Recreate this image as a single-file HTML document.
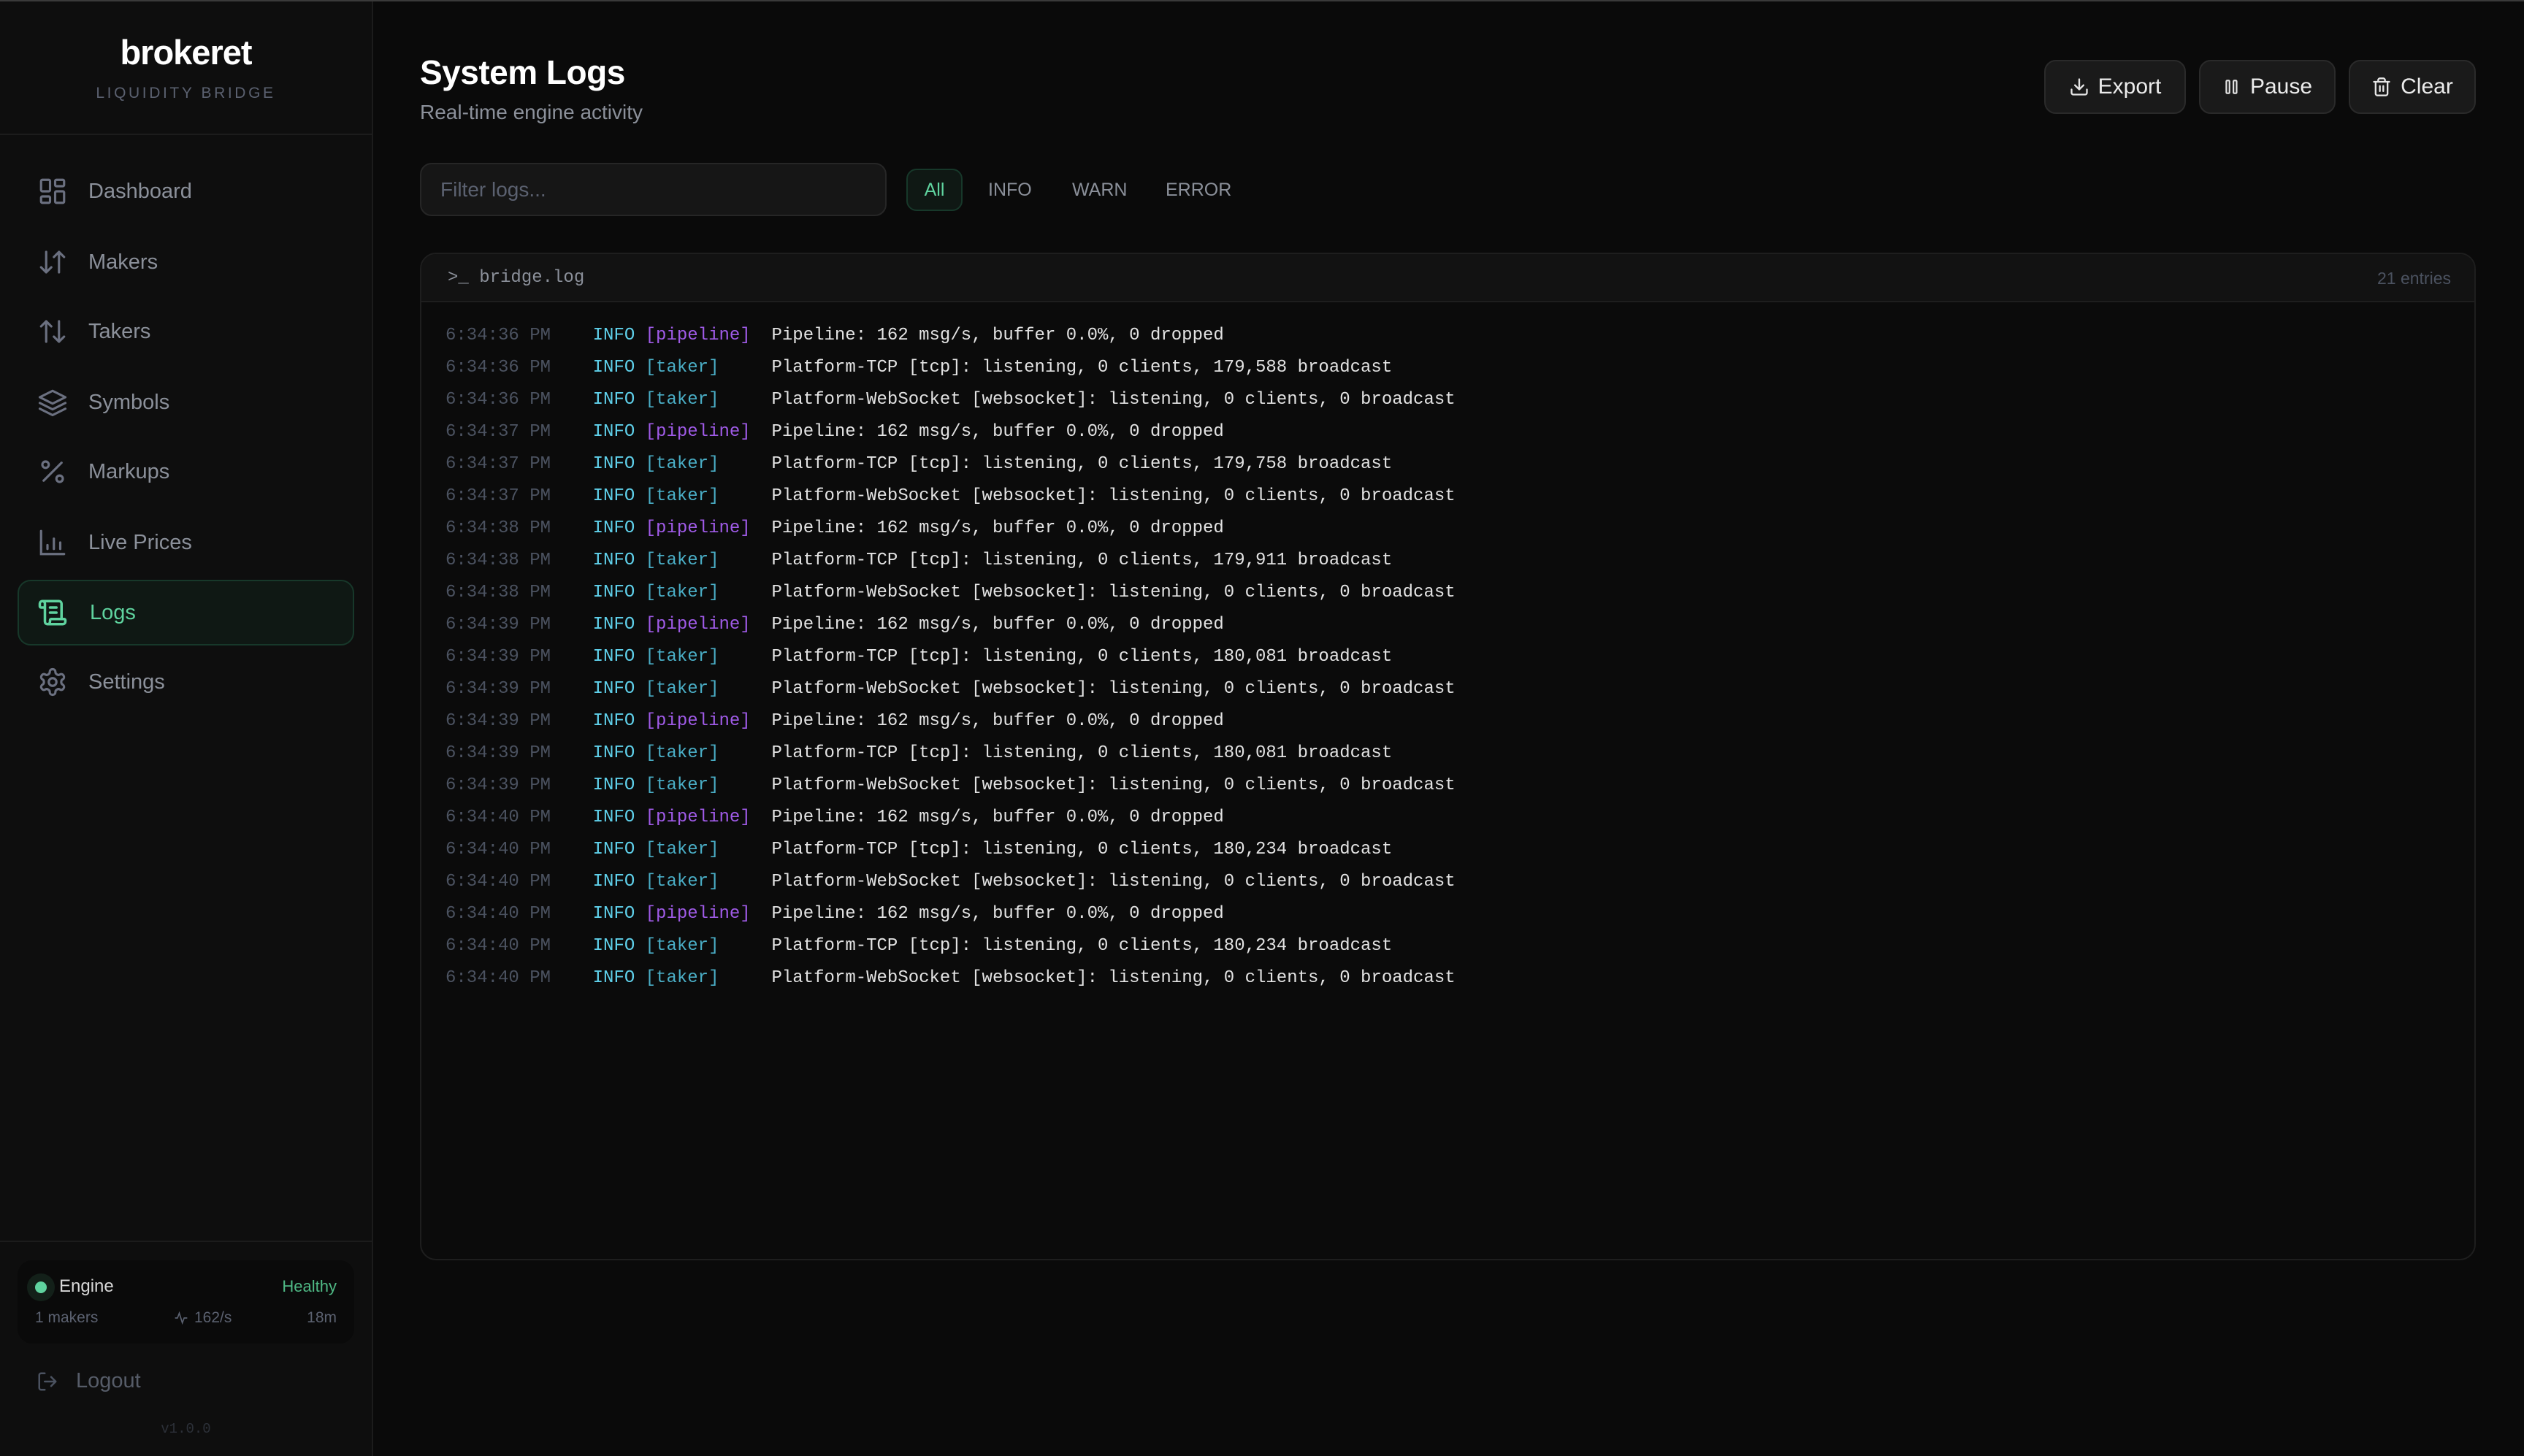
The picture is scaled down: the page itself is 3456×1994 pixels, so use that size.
<!DOCTYPE html>
<html><head><meta charset="utf-8"><style>
*{margin:0;padding:0;box-sizing:border-box}
html,body{width:3456px;height:1994px;background:#0a0a0a;overflow:hidden;font-family:"Liberation Sans",sans-serif}
.top{position:absolute;left:0;top:0;width:3456px;height:2px;background:#3a3a3a}
.side{position:absolute;left:0;top:2px;width:511px;height:1992px;background:#0e0e0e;border-right:2px solid #1c1c1c}
.logo{position:absolute;left:0;width:509px;top:42px;text-align:center;color:#fff;font-weight:bold;font-size:47px;letter-spacing:-1px}
.sub{position:absolute;left:0;width:509px;top:114px;text-align:center;color:#5b6170;font-size:21px;letter-spacing:3.6px}
.div{position:absolute;left:0;width:509px;height:2px;background:#1c1c1c}
.nav{position:absolute;left:24px;width:461px;height:90px;display:flex;align-items:center;color:#8b909a;font-size:29px}
.nav svg{position:absolute;left:27px;top:24px}
.nav span{position:absolute;left:97px}
.nav.act{background:#0f1814;border:2px solid #17382a;border-radius:18px;color:#5fd39f}
.eng{position:absolute;left:24px;top:1724px;width:461px;height:114px;background:#0a0a0a;border-radius:20px}
h1{position:absolute;left:575px;top:72px;font-size:46px;color:#fff;font-weight:bold;letter-spacing:-0.5px}
.desc{position:absolute;left:575px;top:138px;font-size:28px;color:#8b909a}
.btn{position:absolute;top:82px;height:74px;background:#1a1a1a;border:2px solid #2a2a2a;border-radius:16px;color:#ececec;font-size:30px;display:flex;align-items:center;justify-content:center;gap:12px}
.inp{position:absolute;left:575px;top:223px;width:639px;height:73px;background:#161616;border:2px solid #262626;border-radius:16px;color:#5b6170;font-size:28px;padding-left:26px;line-height:69px}
.tab{position:absolute;top:231px;height:58px;line-height:58px;font-size:25px;color:#8b909a}
.panel{position:absolute;left:575px;top:346px;width:2815px;height:1380px;background:#0b0b0b;border:2px solid #1e1e1e;border-radius:22px;overflow:hidden}
.ph{height:66px;background:#121212;border-bottom:2px solid #1e1e1e;position:relative}
.mono{font-family:"Liberation Mono","DejaVu Sans Mono",monospace}
.rows{position:absolute;left:33px;top:90px}
.r{height:44px;line-height:44px;font-size:24px;white-space:pre;color:#e3e3e3}
.t{color:#4b5260}.i{color:#5fd0ea}.p{color:#a05be8}.k{color:#4aaec6}
</style></head><body>
<div class="top"></div>
<div class="side">
<div class="logo">brokeret</div>
<div class="sub">LIQUIDITY BRIDGE</div>
<div class="div" style="top:181px"></div>

<div class="nav" style="top:215px"><svg width="42" height="42" viewBox="0 0 24 24" fill="none" stroke="#6b7080" stroke-width="1.8" stroke-linejoin="round"><rect x="3" y="3" width="7" height="9" rx="1"/><rect x="14" y="3" width="7" height="5" rx="1"/><rect x="14" y="12" width="7" height="9" rx="1"/><rect x="3" y="16" width="7" height="5" rx="1"/></svg><span>Dashboard</span></div>
<div class="nav" style="top:312px"><svg width="42" height="42" viewBox="0 0 24 24" fill="none" stroke="#6b7080" stroke-width="1.8" stroke-linecap="round" stroke-linejoin="round"><path d="M3 16l4 4 4-4M7 20V4M21 8l-4-4-4 4M17 4v16"/></svg><span>Makers</span></div>
<div class="nav" style="top:407px"><svg width="42" height="42" viewBox="0 0 24 24" fill="none" stroke="#6b7080" stroke-width="1.8" stroke-linecap="round" stroke-linejoin="round"><path d="M3 8l4-4 4 4M7 4v16M21 16l-4 4-4-4M17 20V4"/></svg><span>Takers</span></div>
<div class="nav" style="top:504px"><svg width="42" height="42" viewBox="0 0 24 24" fill="none" stroke="#6b7080" stroke-width="1.8" stroke-linecap="round" stroke-linejoin="round"><path d="M12 3L2 8l10 5 10-5-10-5z"/><path d="M2 12.5l10 5 10-5"/><path d="M2 17l10 5 10-5"/></svg><span>Symbols</span></div>
<div class="nav" style="top:599px"><svg width="42" height="42" viewBox="0 0 24 24" fill="none" stroke="#6b7080" stroke-width="1.8" stroke-linecap="round"><path d="M19 5L5 19"/><circle cx="6.5" cy="6.5" r="2.5"/><circle cx="17.5" cy="17.5" r="2.5"/></svg><span>Markups</span></div>
<div class="nav" style="top:696px"><svg width="42" height="42" viewBox="0 0 24 24" fill="none" stroke="#6b7080" stroke-width="1.8" stroke-linecap="round"><path d="M3 3v18h18M8 17v-3M13 17V9M18 17v-5"/></svg><span>Live Prices</span></div>
<div class="nav act" style="top:792px"><svg style="left:25px;top:22px" width="42" height="42" viewBox="0 0 24 24" fill="none" stroke="#5fd39f" stroke-width="2" stroke-linecap="round" stroke-linejoin="round"><path d="M15 12h-5M15 8h-5M19 17V5a2 2 0 0 0-2-2H4"/><path d="M8 21h12a2 2 0 0 0 2-2v-1a1 1 0 0 0-1-1H11a1 1 0 0 0-1 1v1a2 2 0 1 1-4 0V5a2 2 0 1 0-4 0v2a1 1 0 0 0 1 1h3"/></svg><span>Logs</span></div>
<div class="nav" style="top:887px"><svg width="42" height="42" viewBox="0 0 24 24" fill="none" stroke="#6b7080" stroke-width="1.8" stroke-linejoin="round"><path d="M12.2 2h-.4a2 2 0 0 0-2 2v.2a2 2 0 0 1-1 1.7l-.4.3a2 2 0 0 1-2 0l-.2-.1a2 2 0 0 0-2.7.7l-.2.4a2 2 0 0 0 .7 2.7l.2.1a2 2 0 0 1 1 1.7v.5a2 2 0 0 1-1 1.8l-.2.1a2 2 0 0 0-.7 2.7l.2.4a2 2 0 0 0 2.7.7l.2-.1a2 2 0 0 1 2 0l.4.3a2 2 0 0 1 1 1.7v.2a2 2 0 0 0 2 2h.4a2 2 0 0 0 2-2v-.2a2 2 0 0 1 1-1.7l.4-.3a2 2 0 0 1 2 0l.2.1a2 2 0 0 0 2.7-.7l.2-.4a2 2 0 0 0-.7-2.7l-.2-.1a2 2 0 0 1-1-1.8v-.5a2 2 0 0 1 1-1.7l.2-.1a2 2 0 0 0 .7-2.7l-.2-.4a2 2 0 0 0-2.7-.7l-.2.1a2 2 0 0 1-2 0l-.4-.3a2 2 0 0 1-1-1.7V4a2 2 0 0 0-2-2z"/><circle cx="12" cy="12" r="3"/></svg><span>Settings</span></div>

<div class="div" style="top:1697px"></div>
<div class="eng">
<div style="position:absolute;left:13px;top:18px;width:38px;height:38px;border-radius:50%;background:#132019"></div>
<div style="position:absolute;left:24px;top:29px;width:16px;height:16px;border-radius:50%;background:#5fd39f"></div>
<div style="position:absolute;left:57px;top:22px;font-size:24px;color:#d8d8d8">Engine</div>
<div style="position:absolute;right:24px;top:23px;font-size:22px;color:#4fb985">Healthy</div>
<div style="position:absolute;left:24px;top:67px;font-size:21px;color:#5b6170">1 makers</div>
<div style="position:absolute;left:214px;top:67px;font-size:21px;color:#5b6170;display:flex;align-items:center;gap:8px"><svg width="20" height="20" viewBox="0 0 24 24" fill="none" stroke="#5b6170" stroke-width="2"><path d="M2 12h4l3-8 5 16 3-8h5"/></svg>162/s</div>
<div style="position:absolute;right:24px;top:67px;font-size:21px;color:#5b6170">18m</div>
</div>
<div style="position:absolute;left:50px;top:1873px;display:flex;align-items:center"><svg width="30" height="30" viewBox="0 0 24 24" fill="none" stroke="#4b5260" stroke-width="2" stroke-linecap="round" stroke-linejoin="round"><path d="M9 21H5a2 2 0 0 1-2-2V5a2 2 0 0 1 2-2h4M16 17l5-5-5-5M21 12H9"/></svg><span style="margin-left:24px;font-size:29px;color:#565c68">Logout</span></div>
<div class="mono" style="position:absolute;left:0;width:509px;top:1944px;text-align:center;font-size:19px;color:#2c3038">v1.0.0</div>
</div>

<h1>System Logs</h1>
<div class="desc">Real-time engine activity</div>
<div class="btn" style="left:2799px;width:194px"><svg width="28" height="28" viewBox="0 0 24 24" fill="none" stroke="#e5e5e5" stroke-width="2" stroke-linecap="round" stroke-linejoin="round"><path d="M21 15v4a2 2 0 0 1-2 2H5a2 2 0 0 1-2-2v-4M7 10l5 5 5-5M12 15V3"/></svg>Export</div>
<div class="btn" style="left:3011px;width:187px"><svg width="26" height="26" viewBox="0 0 24 24" fill="none" stroke="#e5e5e5" stroke-width="2"><rect x="5" y="4" width="4" height="16" rx="1"/><rect x="14" y="4" width="4" height="16" rx="1"/></svg>Pause</div>
<div class="btn" style="left:3216px;width:174px"><svg width="28" height="28" viewBox="0 0 24 24" fill="none" stroke="#e5e5e5" stroke-width="2" stroke-linecap="round" stroke-linejoin="round"><path d="M3 6h18M19 6v14a2 2 0 0 1-2 2H7a2 2 0 0 1-2-2V6M8 6V4a2 2 0 0 1 2-2h4a2 2 0 0 1 2 2v2M10 11v6M14 11v6"/></svg>Clear</div>

<div class="inp">Filter logs...</div>
<div class="tab" style="left:1241px;width:77px;text-align:center;background:#0f1814;border:2px solid #17382a;border-radius:14px;color:#5fd39f;line-height:54px">All</div>
<div class="tab" style="left:1353px">INFO</div>
<div class="tab" style="left:1468px">WARN</div>
<div class="tab" style="left:1596px">ERROR</div>

<div class="panel">
<div class="ph"><div class="mono" style="position:absolute;left:36px;top:19px;font-size:24px;color:#8b909a">&gt;_ bridge.log</div><div style="position:absolute;right:32px;top:20px;font-size:23px;color:#4b5260">21 entries</div></div>
<div class="rows mono">
<div class="r"><span class="t">6:34:36 PM</span>    <span class="i">INFO</span> <span class="p">[pipeline]</span>  Pipeline: 162 msg/s, buffer 0.0%, 0 dropped</div>
<div class="r"><span class="t">6:34:36 PM</span>    <span class="i">INFO</span> <span class="k">[taker]</span>     Platform-TCP [tcp]: listening, 0 clients, 179,588 broadcast</div>
<div class="r"><span class="t">6:34:36 PM</span>    <span class="i">INFO</span> <span class="k">[taker]</span>     Platform-WebSocket [websocket]: listening, 0 clients, 0 broadcast</div>
<div class="r"><span class="t">6:34:37 PM</span>    <span class="i">INFO</span> <span class="p">[pipeline]</span>  Pipeline: 162 msg/s, buffer 0.0%, 0 dropped</div>
<div class="r"><span class="t">6:34:37 PM</span>    <span class="i">INFO</span> <span class="k">[taker]</span>     Platform-TCP [tcp]: listening, 0 clients, 179,758 broadcast</div>
<div class="r"><span class="t">6:34:37 PM</span>    <span class="i">INFO</span> <span class="k">[taker]</span>     Platform-WebSocket [websocket]: listening, 0 clients, 0 broadcast</div>
<div class="r"><span class="t">6:34:38 PM</span>    <span class="i">INFO</span> <span class="p">[pipeline]</span>  Pipeline: 162 msg/s, buffer 0.0%, 0 dropped</div>
<div class="r"><span class="t">6:34:38 PM</span>    <span class="i">INFO</span> <span class="k">[taker]</span>     Platform-TCP [tcp]: listening, 0 clients, 179,911 broadcast</div>
<div class="r"><span class="t">6:34:38 PM</span>    <span class="i">INFO</span> <span class="k">[taker]</span>     Platform-WebSocket [websocket]: listening, 0 clients, 0 broadcast</div>
<div class="r"><span class="t">6:34:39 PM</span>    <span class="i">INFO</span> <span class="p">[pipeline]</span>  Pipeline: 162 msg/s, buffer 0.0%, 0 dropped</div>
<div class="r"><span class="t">6:34:39 PM</span>    <span class="i">INFO</span> <span class="k">[taker]</span>     Platform-TCP [tcp]: listening, 0 clients, 180,081 broadcast</div>
<div class="r"><span class="t">6:34:39 PM</span>    <span class="i">INFO</span> <span class="k">[taker]</span>     Platform-WebSocket [websocket]: listening, 0 clients, 0 broadcast</div>
<div class="r"><span class="t">6:34:39 PM</span>    <span class="i">INFO</span> <span class="p">[pipeline]</span>  Pipeline: 162 msg/s, buffer 0.0%, 0 dropped</div>
<div class="r"><span class="t">6:34:39 PM</span>    <span class="i">INFO</span> <span class="k">[taker]</span>     Platform-TCP [tcp]: listening, 0 clients, 180,081 broadcast</div>
<div class="r"><span class="t">6:34:39 PM</span>    <span class="i">INFO</span> <span class="k">[taker]</span>     Platform-WebSocket [websocket]: listening, 0 clients, 0 broadcast</div>
<div class="r"><span class="t">6:34:40 PM</span>    <span class="i">INFO</span> <span class="p">[pipeline]</span>  Pipeline: 162 msg/s, buffer 0.0%, 0 dropped</div>
<div class="r"><span class="t">6:34:40 PM</span>    <span class="i">INFO</span> <span class="k">[taker]</span>     Platform-TCP [tcp]: listening, 0 clients, 180,234 broadcast</div>
<div class="r"><span class="t">6:34:40 PM</span>    <span class="i">INFO</span> <span class="k">[taker]</span>     Platform-WebSocket [websocket]: listening, 0 clients, 0 broadcast</div>
<div class="r"><span class="t">6:34:40 PM</span>    <span class="i">INFO</span> <span class="p">[pipeline]</span>  Pipeline: 162 msg/s, buffer 0.0%, 0 dropped</div>
<div class="r"><span class="t">6:34:40 PM</span>    <span class="i">INFO</span> <span class="k">[taker]</span>     Platform-TCP [tcp]: listening, 0 clients, 180,234 broadcast</div>
<div class="r"><span class="t">6:34:40 PM</span>    <span class="i">INFO</span> <span class="k">[taker]</span>     Platform-WebSocket [websocket]: listening, 0 clients, 0 broadcast</div>
</div>
</div>
</body></html>
